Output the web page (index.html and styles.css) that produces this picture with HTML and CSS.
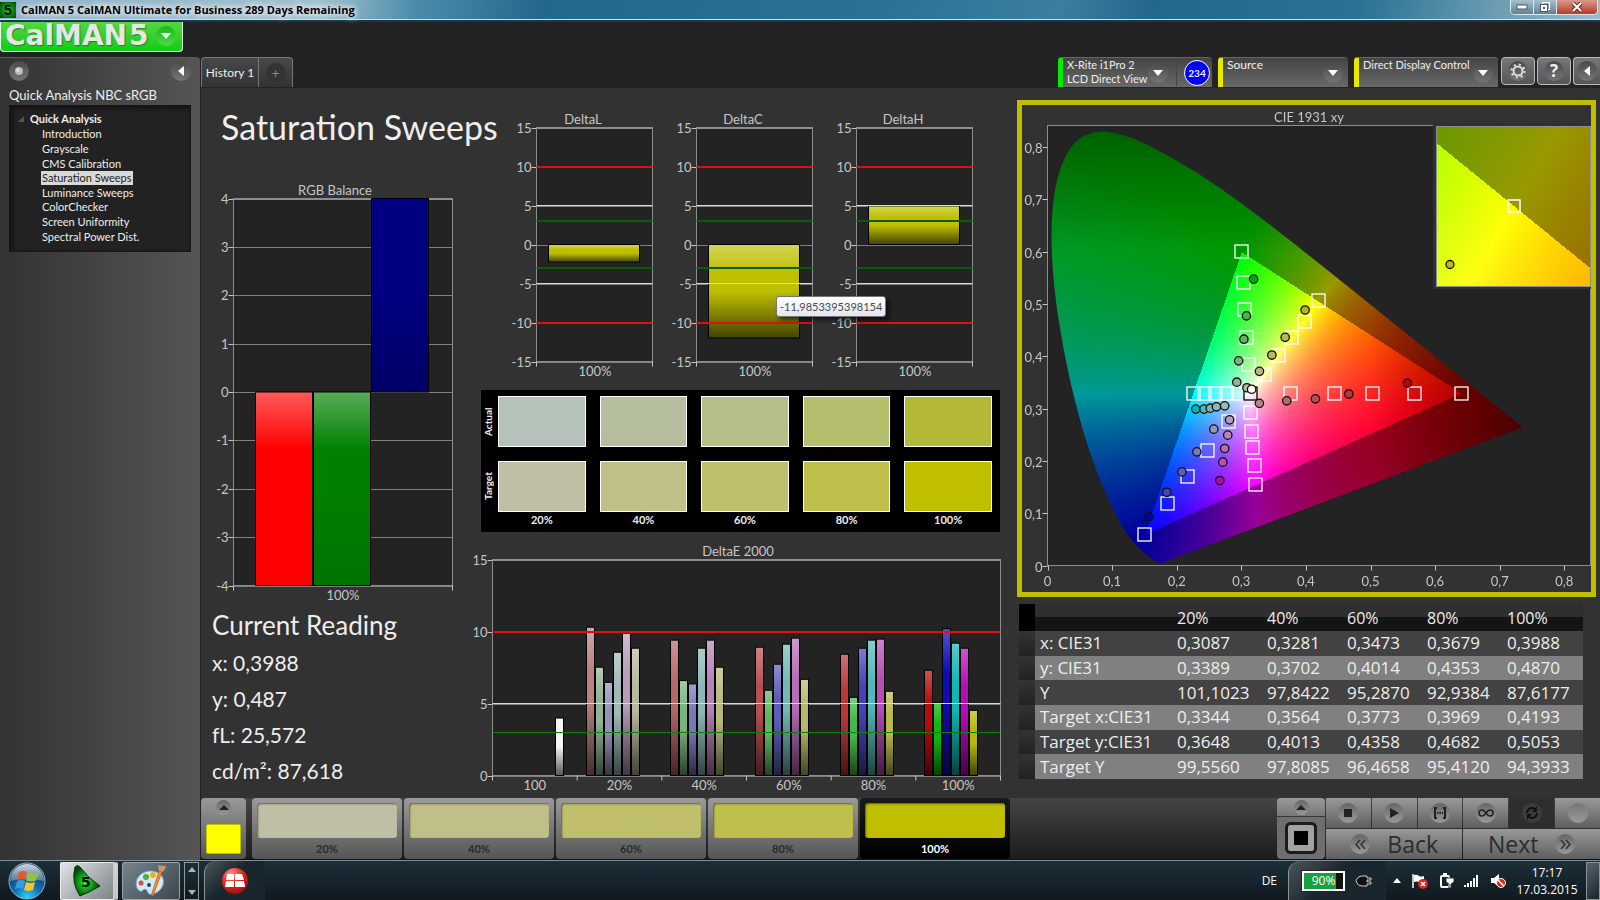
FILE: index.html
```html
<!DOCTYPE html>
<html lang="en">
<head>
  <meta charset="UTF-8">
  <meta name="viewport" content="width=device-width, initial-scale=1.0">
  <title>CalMAN 5 CalMAN Ultimate for Business</title>
  <link rel="stylesheet" href="styles.css">
</head>
<body>
  <!-- Window title bar -->
  <div class="titlebar">
    <span class="app-icon">5</span>
    <span class="window-title">CalMAN 5 CalMAN Ultimate for Business 289 Days Remaining</span>
    <div class="window-buttons">
      <button type="button" aria-label="Minimize"><svg width="12" height="6"><rect x="1" y="1" width="10" height="4" fill="#fff" stroke="#4a5a68"/></svg></button>
      <button type="button" aria-label="Restore"><svg width="12" height="12"><rect x="3.5" y="1.5" width="7" height="7" fill="none" stroke="#fff"/><rect x="1.5" y="3.5" width="7" height="7" fill="#fff" stroke="#4a5a68"/><rect x="4" y="6" width="2" height="2" fill="#4a5a68"/></svg></button>
      <button type="button" class="close" aria-label="Close"><svg width="12" height="10" viewBox="0 0 12 10"><path d="M2 1l8 8M10 1l-8 8" stroke="#5a2a28" stroke-width="4"/><path d="M2 1l8 8M10 1l-8 8" stroke="#fff" stroke-width="2"/></svg></button>
    </div>
  </div>

  <div class="brandbar">
    <button type="button" class="logo">
      <span class="logo-text">CalMAN</span><span class="logo-text">5</span>
      <span class="round logo-arrow"><svg width="10" height="6"><path d="M0 0h10L5 6z" fill="#fff"/></svg></span>
    </button>
  </div>

  <div class="workspace">
    <aside class="sidebar">
      <div class="sidebar-top">
        <button type="button" class="round" aria-label="Options"><svg width="10" height="10"><circle cx="5" cy="5" r="4" fill="#bbb"/><circle cx="4" cy="4" r="2" fill="#ddd"/></svg></button>
        <button type="button" class="round" aria-label="Collapse"><svg width="6" height="10"><path d="M6 0v10L0 5z" fill="#fff"/></svg></button>
      </div>
      <h2>Quick Analysis NBC sRGB</h2>
      <nav class="tree">
        <p><svg width="6" height="6"><path d="M6 0v6H0z" fill="#555"/></svg>Quick Analysis</p>
        <ul>
          <li><a href="#">Introduction</a></li>
          <li><a href="#">Grayscale</a></li>
          <li><a href="#">CMS Calibration</a></li>
          <li><a href="#" class="selected">Saturation Sweeps</a></li>
          <li><a href="#">Luminance Sweeps</a></li>
          <li><a href="#">ColorChecker</a></li>
          <li><a href="#">Screen Uniformity</a></li>
          <li><a href="#">Spectral Power Dist.</a></li>
        </ul>
      </nav>
    </aside>

    <div class="content">
      <header class="header">
        <div class="tabs">
          <button type="button" class="tab">History 1</button>
          <button type="button" class="tab tab-add" aria-label="New tab"><span class="round">+</span></button>
        </div>
        <div class="devices">
          <div class="device meter">
            <button type="button" class="device-name">X-Rite i1Pro 2<br>LCD Direct View</button>
            <span class="round"><svg width="10" height="6"><path d="M0 0h10L5 6z" fill="#fff"/></svg></span>
            <span class="counter"><b>234</b></span>
          </div>
          <div class="device source">
            <button type="button" class="device-name">Source</button>
            <span class="round"><svg width="10" height="6"><path d="M0 0h10L5 6z" fill="#fff"/></svg></span>
          </div>
          <div class="device display">
            <button type="button" class="device-name">Direct Display Control</button>
            <span class="round"><svg width="10" height="6"><path d="M0 0h10L5 6z" fill="#fff"/></svg></span>
          </div>
          <button type="button" class="tool" aria-label="Settings"><span class="round"><svg width="16" height="16" viewBox="0 0 16 16" fill="none" stroke="#ddd"><circle cx="8" cy="8" r="4.5" stroke-width="2"/><circle cx="8" cy="8" r="6.5" stroke-width="2" stroke-dasharray="2.1 3"/></svg></span></button>
          <button type="button" class="tool" aria-label="Help"><span class="round help">?</span></button>
          <button type="button" class="tool tool-last" aria-label="Hide"><span class="round"><svg width="6" height="10"><path d="M6 0v10L0 5z" fill="#fff"/></svg></span></button>
        </div>
      </header>

      <main class="main">
        <section class="col-left">
          <h1>Saturation Sweeps</h1>
          <svg class="chart" id="rgbBalance" viewBox="0 0 280 425"></svg>
          <div class="reading">
            <h2>Current Reading</h2>
            <p>x: 0,3988</p>
            <p>y: 0,487</p>
            <p>fL: 25,572</p>
            <p>cd/m²: 87,618</p>
          </div>
        </section>

        <section class="col-middle">
          <div class="deltas">
            <div class="delta"><svg class="chart" id="deltaL" viewBox="0 0 160 275"></svg></div>
            <div class="delta">
              <svg class="chart" id="deltaC" viewBox="0 0 160 275"></svg>
              <div class="tooltip">-11,9853395398154</div>
            </div>
            <div class="delta"><svg class="chart" id="deltaH" viewBox="0 0 160 275"></svg></div>
          </div>
          <div class="swatches">
            <span class="side">Actual</span>
            <i class="a20"></i><i class="a40"></i><i class="a60"></i><i class="a80"></i><i class="a100"></i>
            <span class="side">Target</span>
            <i class="t20"></i><i class="t40"></i><i class="t60"></i><i class="t80"></i><i class="t100"></i>
            <span></span>
            <b>20%</b><b>40%</b><b>60%</b><b>80%</b><b>100%</b>
          </div>
          <svg class="chart" id="deltaE" viewBox="0 0 530 250"></svg>
        </section>

        <section class="col-right">
          <div class="cie">
            <svg class="chart" id="cie" viewBox="0 0 569 487">
              <foreignObject x="26" y="21" width="542" height="440"><canvas id="gamut" width="542" height="440"></canvas></foreignObject>
              <g id="ciePoints"></g>
              <rect x="411" y="18" width="160" height="166" fill="#303030"/>
              <foreignObject x="414" y="22" width="154" height="159"><canvas id="gamutZoom" width="154" height="159"></canvas></foreignObject>
              <rect x="414.5" y="21.5" width="154" height="160" fill="none" stroke="#8e8e8e"/>
              <rect x="486" y="95" width="12" height="12" fill="none" stroke="#fff" stroke-width="1.5"/>
              <circle cx="428" cy="159.5" r="4" fill="#bfbf00" stroke="#111" stroke-width="1.3"/>
            </svg>
          </div>
          <table class="readings">
            <thead>
              <tr><th class="grip"></th><th></th><th>20%</th><th>40%</th><th>60%</th><th>80%</th><th>100%</th></tr>
            </thead>
            <tbody>
              <tr><td class="grip"></td><th>x: CIE31</th><td>0,3087</td><td>0,3281</td><td>0,3473</td><td>0,3679</td><td>0,3988</td></tr>
              <tr><td class="grip"></td><th>y: CIE31</th><td>0,3389</td><td>0,3702</td><td>0,4014</td><td>0,4353</td><td>0,4870</td></tr>
              <tr><td class="grip"></td><th>Y</th><td>101,1023</td><td>97,8422</td><td>95,2870</td><td>92,9384</td><td>87,6177</td></tr>
              <tr><td class="grip"></td><th>Target x:CIE31</th><td>0,3344</td><td>0,3564</td><td>0,3773</td><td>0,3969</td><td>0,4193</td></tr>
              <tr><td class="grip"></td><th>Target y:CIE31</th><td>0,3648</td><td>0,4013</td><td>0,4358</td><td>0,4682</td><td>0,5053</td></tr>
              <tr><td class="grip"></td><th>Target Y</th><td>99,5560</td><td>97,8085</td><td>96,4658</td><td>95,4120</td><td>94,3933</td></tr>
            </tbody>
          </table>
        </section>
      </main>

      <footer class="strip">
        <button type="button" class="pattern" aria-label="Pattern colour"><span class="round small"><svg width="10" height="5"><path d="M0 5h10L5 0z" fill="#222"/></svg></span><i></i></button>
        <div class="levels">
          <button type="button" class="level"><i class="t20"></i>20%</button>
          <button type="button" class="level"><i class="t40"></i>40%</button>
          <button type="button" class="level"><i class="t60"></i>60%</button>
          <button type="button" class="level"><i class="t80"></i>80%</button>
          <button type="button" class="level active"><i class="t100"></i>100%</button>
        </div>
        <div class="controls">
          <div class="window-pattern">
            <button type="button" aria-label="More"><span class="round small"><svg width="10" height="5"><path d="M0 5h10L5 0z" fill="#222"/></svg></span></button>
            <button type="button" aria-label="Pattern window"><svg width="32" height="32" viewBox="0 0 32 32"><rect x="1.5" y="1.5" width="29" height="29" rx="4" fill="#a2a2a2" stroke="#1c1c1c" stroke-width="3"/><rect x="9" y="9" width="14" height="14" fill="#000"/></svg></button>
          </div>
          <div class="transport">
            <button type="button" aria-label="Stop"><span class="round"><svg width="8" height="8"><rect width="8" height="8" fill="#222"/></svg></span></button>
            <button type="button" aria-label="Play"><span class="round"><svg width="10" height="10"><path d="M1 0v10l9-5z" fill="#222"/></svg></span></button>
            <button type="button" aria-label="Read series"><span class="round"><svg width="14" height="12" fill="none" stroke="#222" stroke-width="2"><path d="M4 1H2v10h2M10 1h2v10h-2"/><path d="M4 6h6" stroke-dasharray="1.5 1"/></svg></span></button>
            <button type="button" aria-label="Read continuously"><span class="round"><svg width="16" height="8" fill="none" stroke="#222" stroke-width="1.5"><path d="M8 4C6 1 5 1 4 1a3 3 0 0 0 0 6c1 0 2 0 4-3s3-3 4-3a3 3 0 0 1 0 6c-1 0-2 0-4-3z"/></svg></span></button>
            <button type="button" class="pressed" aria-label="Refresh"><span class="round"><svg width="14" height="14" viewBox="0 0 14 14"><path d="M2 7a5 5 0 0 1 8-4M12 7a5 5 0 0 1-8 4" fill="none" stroke="#111" stroke-width="2"/><path d="M12 0v6H7zM2 14V8h5z" fill="#111"/></svg></span></button>
            <button type="button" aria-label="Record"><span class="round blank"></span></button>
            <button type="button" class="wide"><span class="round"><svg width="11" height="11" fill="none" stroke="#333" stroke-width="1.5"><path d="M5 1L1 5.5 5 10M10 1L6 5.5 10 10"/></svg></span>Back</button>
            <button type="button" class="wide">Next<span class="round"><svg width="11" height="11" fill="none" stroke="#333" stroke-width="1.5"><path d="M1 1l4 4.5L1 10M6 1l4 4.5L6 10"/></svg></span></button>
          </div>
        </div>
      </footer>
    </div>
  </div>

  <div class="taskbar">
    <button type="button" class="start" aria-label="Start">
      <svg width="40" height="40" viewBox="0 0 40 40">
        <defs>
          <radialGradient id="orb" cx=".5" cy=".95" r=".9"><stop offset="0" stop-color="#20d8ff"/><stop offset=".4" stop-color="#1272b4"/><stop offset="1" stop-color="#0c2f58"/></radialGradient>
          <linearGradient id="gloss" x2="0" y2="1"><stop offset="0" stop-color="#fff" stop-opacity=".8"/><stop offset="1" stop-color="#fff" stop-opacity=".25"/></linearGradient>
        </defs>
        <circle cx="20" cy="20" r="18" fill="url(#orb)" stroke="#9ab4c4"/>
        <path d="M3 20a17 17 0 0 1 34 0q-17-4-34 0z" fill="url(#gloss)"/>
        <path d="M12 11q4-2 8 0l-2 8q-4-2-8 0z" fill="#e8582a"/>
        <path d="M21 11.5q4 2 11 0l-3 8q-4 2-10 0z" fill="#8ec442"/>
        <path d="M10 20q4-2 8 0l-2 8q-4-2-8 0z" fill="#3c9ae0"/>
        <path d="M19 21q4 2 9 0l-2 8q-5 2-9 0z" fill="#fbc02c"/>
      </svg>
    </button>
    <button type="button" class="task calman" aria-label="CalMAN">
      <svg width="30" height="34" viewBox="0 0 30 34">
        <defs><radialGradient id="blade" cx=".45" cy=".55" r=".5"><stop offset="0" stop-color="#1cff2c"/><stop offset="1" stop-color="#044a08"/></radialGradient></defs>
        <path d="M3 3Q5 0 8 3Q17 15 28 22Q18 28 8 32Q-1 19 3 3z" fill="url(#blade)" stroke="#031" />
        <text x="9" y="23" class="blade-text">5</text>
      </svg>
    </button>
    <button type="button" class="task" aria-label="Paint">
      <svg width="34" height="34" viewBox="0 0 34 34">
        <path d="M3 24C-1 14 9 6 18 7c9 1 13 7 11 14-3 9-14 11-15 8-1-4-3-5-6-2-2 1-4-1-5-3z" fill="#d3e9f6" stroke="#6aa6cc"/>
        <circle cx="7" cy="19" r="2.5" fill="#e5483c"/><circle cx="12" cy="13" r="3" fill="#4cae3c"/><circle cx="19" cy="11" r="3" fill="#f2b01e"/><circle cx="15" cy="21" r="2" fill="#1c4a70"/>
        <path d="M25 7l3 1-9 24q-2 0-1-3z" fill="#f08a24" stroke="#a85a10" stroke-width=".6"/><path d="M24 1q6 1 8 1-1 5-4 6l-3-1z" fill="#c89660"/>
      </svg>
    </button>
    <div class="task-scroll">
      <button type="button" aria-label="Up"><svg width="8" height="5"><path d="M0 5h8L4 0z" fill="#aab4ba"/></svg></button>
      <button type="button" aria-label="Down"><svg width="8" height="5"><path d="M0 0h8L4 5z" fill="#aab4ba"/></svg></button>
    </div>
    <div class="dock dock-left">
      <svg width="28" height="28" viewBox="0 0 28 28">
        <defs><radialGradient id="ball" cx=".35" cy=".2" r=".9"><stop offset="0" stop-color="#ff8a80"/><stop offset=".5" stop-color="#e0261c"/><stop offset="1" stop-color="#8e0c08"/></radialGradient></defs>
        <circle cx="14" cy="14" r="13" fill="url(#ball)"/>
        <path d="M6 7h7v6H5zM14 7h7l2 6h-9zM5 14h8v6H4zM14 14h9l1 6H14z" fill="#fff"/>
      </svg>
    </div>
    <span class="lang">DE</span>
    <div class="dock dock-right">
      <span class="battery"><span>90%</span></span>
      <svg width="18" height="14" viewBox="0 0 18 14"><path d="M7 2h5v2h4v2h-4v2h4v2h-4v2H7Q3 12 2 9Q0 6 2 5Q3 2 7 2z" fill="#111" stroke="#ccc"/></svg>
    </div>
    <div class="tray">
      <svg width="8" height="5"><path d="M0 5h8L4 0z" fill="#fff"/></svg>
      <svg width="18" height="16" viewBox="0 0 18 16"><path d="M2 1v14" stroke="#fff" stroke-width="1.5"/><path d="M3 2q3-1 5 1 2 1 5 0v7q-3 1-5-1-2-1-5 0z" fill="#fff"/><circle cx="12" cy="11" r="5" fill="#d8281c"/><path d="M10 9l4 4M14 9l-4 4" stroke="#fff" stroke-width="1.5"/></svg>
      <svg width="16" height="16" viewBox="0 0 16 16"><rect x="2" y="3" width="8" height="11" rx="1" fill="none" stroke="#fff" stroke-width="2"/><path d="M4 1h4" stroke="#fff" stroke-width="2"/><path d="M7 5h8v4l-3 2v4h-2v-4L7 9z" fill="#fff" stroke="#234"/></svg>
      <svg width="16" height="12" fill="#fff"><path d="M0 10h2v2H0zM3 8h2v4H3zM6 6h2v6H6zM9 3h2v9H9zM12 0h2v12h-2z"/></svg>
      <svg width="18" height="16" viewBox="0 0 18 16"><path d="M1 5h3l5-4v13l-5-4H1z" fill="#fff"/><circle cx="11" cy="10" r="4.5" fill="#d8281c" stroke="#fff"/><path d="M8 7l6 6" stroke="#fff" stroke-width="1.5"/></svg>
    </div>
    <div class="clock">17:17<br>17.03.2015</div>
    <button type="button" class="show-desktop" aria-label="Show desktop"></button>
  </div>

  <script src="charts.js"></script>
</body>
</html>
```
FILE: styles.css
```css
/* General */
* {
  box-sizing: border-box;
  margin: 0;
  padding: 0;
}

body {
  font-family: Lato, "Open Sans", sans-serif;
  font-size: 12px;
  background-color: #232323;
  color: #eee;
  display: flex;
  flex-direction: column;
  height: 100vh;
  overflow: hidden;
}

button {
  font: inherit;
  color: inherit;
  border: none;
  background: none;
}

svg, canvas {
  display: block;
}

ul {
  list-style: none;
}

a {
  color: inherit;
  text-decoration: none;
}

.round {
  width: 20px;
  height: 20px;
  flex: none;
  border-radius: 50%;
  background: linear-gradient(#4a4a4a, #757575);
  display: flex;
  align-items: center;
  justify-content: center;
}

.round.small {
  width: 15px;
  height: 15px;
}

/* Title bar */
.titlebar {
  height: 22px;
  flex: none;
  display: flex;
  align-items: center;
  background: linear-gradient(100deg, #8fb3c8 0%, #a3c0cf 20%, #4b8cab 26%, #22688a 34%, #2a7295 55%, #3a7f9f 66%, #22688a 72%, #2a7294 85%, #7fa9bc 96%, #9cbccb 100%);
  border-bottom: 2px solid #16384a;
  box-shadow: inset 0 -1px #cfe0e8;
}

.app-icon {
  width: 16px;
  height: 16px;
  background: radial-gradient(#12d41c, #063a08);
  color: #000;
  font: bold 14px/16px "Liberation Sans", sans-serif;
  text-align: center;
}

.window-title {
  margin-left: 5px;
  color: #000;
  font: bold 11px/20px "Open Sans", sans-serif;
  text-shadow: 0 0 6px #fff, 0 0 6px #fff;
}

.window-buttons {
  display: flex;
  margin: 0 2px 0 auto;
  align-self: flex-start;
  height: 15px;
  border: 1px solid #dbe8ee;
  border-top: none;
  border-radius: 0 0 5px 5px;
  overflow: hidden;
}

.window-buttons button {
  width: 23px;
  display: flex;
  align-items: center;
  justify-content: center;
  background: linear-gradient(#a8c0cc, #5d8296);
  border-right: 1px solid #dbe8ee;
}

.window-buttons .close {
  width: 40px;
  background: linear-gradient(#d89a8c, #b83a24);
  border-right: none;
}

/* Logo */
.brandbar {
  height: 35px;
  flex: none;
}

.logo {
  display: flex;
  align-items: center;
  width: 183px;
  height: 30px;
  padding: 0 6px 2px 4px;
  background: linear-gradient(#56d640, #12cc18);
  border: 1px solid #e8ffe8;
  border-top: none;
  border-radius: 0 0 4px 4px;
}

.logo-text {
  font: bold 28px/28px "DejaVu Sans", sans-serif;
  color: #e4e8e4;
  text-shadow: 1px 1px 1px #2b7a2b;
  margin-right: 2px;
}

.logo-arrow {
  margin-left: auto;
  background: linear-gradient(#12b818, #4cdc48);
}

/* Sidebar */
.workspace {
  flex: 1;
  display: flex;
  min-height: 0;
}

.sidebar {
  width: 200px;
  flex: none;
  background: linear-gradient(90deg, #333, #555);
  border-top: 1px solid #5a5a5a;
  border-radius: 0 4px 0 0;
  padding: 3px 9px;
}

.sidebar-top {
  display: flex;
  justify-content: space-between;
}

.sidebar h2 {
  font-size: 13px;
  font-weight: normal;
  line-height: 20px;
  margin-top: 4px;
}

.tree {
  height: 147px;
  background: #222;
  border: 1px solid #161616;
  box-shadow: inset 2px 2px 5px #111;
  padding-top: 6px;
  font-size: 11px;
}

.tree p {
  display: flex;
  align-items: center;
  gap: 6px;
  margin-bottom: 1px;
  padding-left: 8px;
  font-weight: bold;
  line-height: 14px;
}

.tree ul {
  display: grid;
  grid-auto-rows: 1fr;
  height: 117px;
  padding-left: 31px;
}

.tree li {
  display: flex;
  align-items: center;
}

.tree a {
  padding: 0 1px;
  line-height: 14px;
}

.tree .selected {
  background: #d9d9d9;
  color: #222;
}

/* Header with tabs and devices */
.content {
  flex: 1;
  min-width: 0;
  display: flex;
  flex-direction: column;
  border-left: 1px solid #222;
}

.header {
  height: 31px;
  flex: none;
  display: flex;
  justify-content: space-between;
}

.tabs, .devices {
  display: flex;
}

.tab {
  width: 58px;
  height: 30px;
  border: 1px solid #777;
  border-bottom: none;
  border-radius: 4px 0 0 0;
  background: linear-gradient(#484848, #333);
}

.tab-add {
  width: 34px;
  border-left: none;
  border-radius: 0 4px 0 0;
  display: flex;
  align-items: center;
  justify-content: center;
}

.tab-add .round {
  background: #333;
  color: #888;
  font-size: 14px;
}

.device {
  height: 30px;
  margin-right: 6px;
  display: flex;
  align-items: center;
  border-top: 1px solid #666;
  border-left: 5px solid #e8e800;
  border-radius: 4px 4px 0 0;
  background: linear-gradient(#444, #686868);
}

.device-name {
  align-self: flex-start;
  flex: 1;
  padding-left: 4px;
  text-align: left;
  line-height: 14px;
  white-space: nowrap;
}

.device .round {
  margin-right: 5px;
}

.meter {
  width: 154px;
  border-left-color: #0e0;
}

.meter .device-name {
  font-size: 11px;
}

.meter .round {
  margin-right: 8px;
}

.source {
  width: 130px;
}

.display {
  width: 144px;
  margin-right: 3px;
}

.display .device-name {
  font-size: 11px;
}

.counter {
  border-left: 1px solid #444;
  padding: 0 2px 0 7px;
}

.counter b {
  display: block;
  width: 26px;
  height: 26px;
  border-radius: 50%;
  border: 1px solid #fff;
  background: #00f;
  font-size: 10px;
  line-height: 24px;
  text-align: center;
}

.tool {
  width: 34px;
  height: 28px;
  margin-right: 2px;
  border: 1px solid #bbb;
  border-radius: 4px;
  background: linear-gradient(#777, #555);
  display: flex;
  align-items: center;
  justify-content: center;
}

.tool-last {
  width: 27px;
  margin-right: 0;
  border-right: none;
  border-radius: 4px 0 0 4px;
}

.help {
  font: bold 17px/20px "Open Sans", sans-serif;
}

/* Main area */
.main {
  flex: 1;
  min-height: 0;
  display: grid;
  grid-template-columns: minmax(0, 280fr) minmax(0, 530fr) minmax(0, 589fr);
  background: #323232;
}

.chart {
  width: 100%;
  height: auto;
  overflow: visible;
  font-size: 13px;
  fill: #c6c6c6;
}

h1 {
  height: 92px;
  padding: 17px 0 0 20px;
  font-size: 34px;
  font-weight: normal;
  line-height: 44px;
  white-space: nowrap;
}

.reading {
  padding: 5px 0 0 11px;
}

.reading h2 {
  margin-bottom: 5px;
  font-size: 26px;
  font-weight: normal;
  line-height: 30px;
}

.reading p {
  font-size: 21px;
  line-height: 36px;
}

.deltas {
  display: flex;
  padding: 17px 34px 10px 16px;
}

.delta {
  flex: 1;
  position: relative;
}

.tooltip {
  position: absolute;
  z-index: 2;
  left: 119px;
  top: 191px;
  padding: 0 3px;
  border: 1px solid #767676;
  border-radius: 3px;
  background: linear-gradient(#fff, #e4e5f0);
  box-shadow: 3px 3px 4px rgba(0, 0, 0, 0.6);
  color: #4c4c4c;
  font-size: 11px;
  line-height: 19px;
}

.swatches {
  display: grid;
  grid-template-columns: 3px repeat(5, 1fr);
  grid-template-rows: 51px 51px 14px;
  gap: 14px;
  margin-right: 11px;
  height: 142px;
  padding: 6px 8px 0 0;
  background: #000;
}

.swatches i {
  border: 1px solid #fff;
}

.swatches b {
  margin-top: -13px;
  font-size: 11px;
  text-align: center;
  line-height: 14px;
}

.side {
  width: 14px;
  writing-mode: vertical-rl;
  transform: rotate(180deg);
  text-align: center;
  font-size: 10px;
  font-weight: bold;
  line-height: 14px;
}

.a20 { background: #b4c2ba; }
.a40 { background: #b5bf9f; }
.a60 { background: #b5bf87; }
.a80 { background: #b5be6c; }
.a100 { background: #b3b937; }
.t20 { background: #bfbfa5; }
.t40 { background: #bfbf87; }
.t60 { background: #bfbf6c; }
.t80 { background: #bfbf4c; }
.t100 { background: #bfbf00; }

#deltaE {
  margin-top: 8px;
}

.col-right {
  padding: 12px 4px 0 6px;
}

.cie {
  border: 5px solid #bfbf00;
}

#cie {
  overflow: hidden;
}

/* Readings table */
.readings {
  width: calc(100% - 15px);
  height: 175px;
  margin: 7px 0 0 2px;
  border-collapse: collapse;
  table-layout: fixed;
  font: 17px/20px "Open Sans", sans-serif;
  color: #eee;
}

.readings th {
  font-weight: normal;
  text-align: left;
}

.readings thead tr {
  height: 27px;
  background: linear-gradient(#2f2f2f 50%, #141414 50%);
}

.readings thead th {
  font-size: 16px;
  width: 80px;
}

.readings thead th:nth-child(2) {
  width: 142px;
}

.readings thead th:nth-child(3) {
  width: 90px;
}

.readings thead th:last-child {
  width: 76px;
}

.readings thead th.grip {
  width: 16px;
  background: #000;
}

.readings tbody tr {
  background: #424242;
}

.readings tbody tr:nth-child(even) {
  background: #808080;
}

.readings tbody th {
  padding-left: 5px;
}

.readings tbody .grip {
  background: linear-gradient(#333, #222);
}

/* Bottom strip */
.strip {
  height: 62px;
  flex: none;
  display: flex;
  background: linear-gradient(#444, #1c1c1c);
  border-bottom: 1px solid #111;
}

.pattern {
  width: 45px;
  padding: 2px 5px 5px;
  display: flex;
  flex-direction: column;
  align-items: center;
  justify-content: space-between;
  border-radius: 4px;
  background: linear-gradient(#999, #555);
  margin-right: 6px;
}

.pattern i {
  width: 35px;
  height: 30px;
  border-radius: 2px;
  background: #ff0;
  border: 1px solid #c0c000;
}

.levels {
  flex: 1;
  display: flex;
  gap: 2px;
}

.level {
  width: 150px;
  padding: 5px 5px 0;
  border-radius: 4px;
  background: linear-gradient(#9a9a9a, #555);
  color: #2a2a2a;
  font-size: 11px;
  font-weight: bold;
  line-height: 21px;
  display: flex;
  flex-direction: column;
  align-items: stretch;
  text-align: center;
}

.level i {
  height: 36px;
  border-radius: 3px;
  box-shadow: inset 1px 1px 2px rgba(0, 0, 0, 0.5);
}

.level.active {
  background: linear-gradient(#1a1a1a, #000);
  color: #fff;
}

.controls {
  width: 323px;
  display: flex;
  gap: 1px;
}

.window-pattern {
  width: 48px;
  display: flex;
  flex-direction: column;
  gap: 1px;
}

.window-pattern button {
  display: flex;
  align-items: center;
  justify-content: center;
  flex: 1;
  background: #6e6e6e;
  border-radius: 0 0 4px 4px;
}

.window-pattern button:first-child {
  flex: none;
  height: 18px;
  background: linear-gradient(#999, #777);
  border-radius: 4px 4px 0 0;
}

.window-pattern .round, .pattern .round, .transport .round {
  background: linear-gradient(#666, #999);
}

.transport {
  flex: 1;
  display: grid;
  grid-template-columns: repeat(6, 1fr);
  grid-template-rows: 1fr 1fr;
  gap: 1px;
}

.transport button {
  display: flex;
  align-items: center;
  justify-content: center;
  background: linear-gradient(#999, #5e5e5e);
}

.transport .pressed {
  background: #2e2e2e;
}

.transport .pressed .round {
  background: #3c3c3c;
}

.transport .blank {
  background: linear-gradient(#777, #999);
}

.transport .wide {
  grid-column: span 3;
  gap: 17px;
  color: #2c2c2c;
  font: 23px/28px "Open Sans", sans-serif;
}

/* Taskbar */
.taskbar {
  height: 40px;
  flex: none;
  display: flex;
  align-items: center;
  background: linear-gradient(#1c2f38, #10191f);
  border-top: 1px solid #7f8d94;
  color: #fff;
  font-family: "Open Sans", sans-serif;
}

.start {
  margin: 0 13px 0 7px;
}

.task {
  width: 58px;
  height: 38px;
  margin-right: 4px;
  border: 1px solid #9aa4a8;
  border-radius: 2px;
  background: linear-gradient(135deg, #76838a, #3c474d);
  display: flex;
  align-items: center;
  justify-content: center;
}

.calman {
  background: linear-gradient(135deg, #dfe3e4, #7d8486);
  border-color: #eee;
  border-right: 5px double #ccc;
}

.blade-text {
  font: bold 14px "DejaVu Sans", sans-serif;
}

.task-scroll {
  width: 15px;
  height: 38px;
  border: 1px solid #8d989e;
  display: flex;
  flex-direction: column;
  justify-content: space-between;
  align-items: center;
  padding: 4px 0;
}

.dock {
  height: 39px;
  display: flex;
  align-items: center;
  border-left: 1px solid #88949a;
  border-radius: 12px 0 0 0;
  background: linear-gradient(135deg, #4b565b 0%, #1a262d 45%);
}

.dock-left {
  width: 61px;
  margin-left: 5px;
  justify-content: center;
}

.lang {
  margin: 0 11px 0 auto;
}

.dock-right {
  width: 98px;
  padding-left: 13px;
  gap: 10px;
}

.battery {
  width: 43px;
  height: 20px;
  border: 2px solid #fff;
  background: linear-gradient(90deg, #18a03c 82%, #111 82%);
  outline: 1px solid #222;
  line-height: 16px;
  text-align: center;
}

.tray {
  width: 115px;
  display: flex;
  align-items: center;
  justify-content: space-between;
  margin-left: 7px;
}

.clock {
  width: 78px;
  text-align: center;
  line-height: 17px;
}

.show-desktop {
  width: 14px;
  height: 38px;
  border: 1px solid #88949a;
  background: linear-gradient(135deg, #57646b, #18242b);
}
```
FILE: charts.js
```js
const NS = 'http://www.w3.org/2000/svg';

function add(parent, tag, attrs, text) {
  const el = document.createElementNS(NS, tag);
  for (const key in attrs) el.setAttribute(key, attrs[key]);
  if (text !== undefined) el.textContent = text;
  parent.appendChild(el);
  return el;
}

function line(svg, x1, y1, x2, y2, stroke, width) {
  add(svg, 'line', { x1, y1, x2, y2, stroke, 'stroke-width': width || 1 });
}

function label(svg, x, y, text, anchor) {
  add(svg, 'text', { x, y, 'text-anchor': anchor || 'middle' }, text);
}

// Light top and dark bottom laid over each bar
function shade(svg, id, light, dark) {
  const g = add(add(svg, 'defs', {}), 'linearGradient', { id, x2: 0, y2: 1 });
  add(g, 'stop', { offset: 0, 'stop-color': '#fff', 'stop-opacity': light });
  add(g, 'stop', { offset: 0.3, 'stop-color': '#fff', 'stop-opacity': 0 });
  add(g, 'stop', { offset: 0.5, 'stop-color': '#000', 'stop-opacity': 0 });
  add(g, 'stop', { offset: 1, 'stop-color': '#000', 'stop-opacity': dark });
}

function bar(svg, x, y, width, height, fill, shadeId) {
  add(svg, 'rect', { x, y, width, height, fill });
  add(svg, 'rect', { x, y, width, height, fill: `url(#${shadeId})`, stroke: '#000' });
}

// Plot frame with horizontal grid lines and value labels
function frame(svg, p) {
  const y = v => p.bottom - (v - p.min) * (p.bottom - p.top) / (p.max - p.min);
  add(svg, 'rect', { x: p.left, y: p.top, width: p.right - p.left, height: p.bottom - p.top, fill: '#232323' });
  for (let v = p.min; v <= p.max; v += p.step) {
    const gy = Math.round(y(v)) + 0.5;
    line(svg, p.left, gy, p.right, gy, '#808080');
    line(svg, p.left - 5, gy, p.left, gy, '#c6c6c6');
    label(svg, p.left - 5, gy + 4, v, 'end');
  }
  add(svg, 'rect', { x: p.left, y: p.top, width: p.right - p.left, height: p.bottom - p.top, fill: 'none', stroke: '#8e8e8e' });
  line(svg, p.left, p.top + 0.5, p.right, p.top + 0.5, '#8e8e8e', 2);
  label(svg, p.titleX, p.top - 4, p.title);
  return y;
}

function rgbBalance() {
  const svg = document.getElementById('rgbBalance');
  const p = { left: 32.5, right: 251.5, top: 18.5, bottom: 405.5, min: -4, max: 4, step: 1, title: 'RGB Balance', titleX: 134 };
  const y = frame(svg, p);
  shade(svg, 'shadeR', 0.35, 0);
  shade(svg, 'shadeG', 0.35, 0.1);
  shade(svg, 'shadeB', 0, 0.2);
  bar(svg, 54.5, y(0), 57, y(-4) - y(0), '#f00', 'shadeR');
  bar(svg, 112.5, y(0), 57, y(-4) - y(0), '#008000', 'shadeG');
  bar(svg, 170.5, y(4), 57, y(0) - y(4), '#000080', 'shadeB');
  line(svg, p.left, p.bottom, p.left, p.bottom + 5, '#c6c6c6');
  line(svg, p.right, p.bottom, p.right, p.bottom + 5, '#c6c6c6');
  label(svg, 142, p.bottom + 14, '100%');
}

function delta(id, title, value) {
  const svg = document.getElementById(id);
  const p = { left: 39.5, right: 155.5, top: 22.5, bottom: 256.5, min: -15, max: 15, step: 5, title: title, titleX: 86 };
  const y = frame(svg, p);
  shade(svg, id + 'Shade', 0.35, 0.65);
  bar(svg, 51.5, Math.min(y(0), y(value)), 91, Math.abs(y(value) - y(0)), '#bfbf00', id + 'Shade');
  [[10, '#e01010', 2], [5, '#f0f020', 1], [3, '#0a5c0a', 2], [-3, '#0a5c0a', 2], [-5, '#f0f020', 1], [-10, '#e01010', 2]].forEach(l => {
    const ly = Math.round(y(l[0])) + (l[2] === 1 ? -0.5 : 0);
    line(svg, p.left, ly, p.right, ly, l[1], l[2]);
  });
  line(svg, p.left, p.bottom, p.left, p.bottom + 5, '#c6c6c6');
  line(svg, p.right, p.bottom, p.right, p.bottom + 5, '#c6c6c6');
  label(svg, 98, p.bottom + 14, '100%');
}

function deltaE() {
  const svg = document.getElementById('deltaE');
  const p = { left: 11.5, right: 519.5, top: 19.5, bottom: 235.5, min: 0, max: 15, step: 5, title: 'DeltaE 2000', titleX: 257 };
  const y = frame(svg, p);
  shade(svg, 'shadeE', 0.3, 0.65);
  const groups = [
    { name: '100', values: [0, 0, 0, 0, 0, 0, 3.99], colors: ['', '', '', '', '', '', '#f4f4f4'] },
    { name: '20%', values: [10.3, 7.52, 6.47, 8.56, 9.88, 8.84], colors: ['#b98383', '#94b394', '#9494b8', '#a0b8b8', '#b89eb8', '#b8b89c'] },
    { name: '40%', values: [9.4, 6.59, 6.36, 8.84, 9.4, 7.52], colors: ['#b96868', '#7ab47a', '#7878b8', '#8cb8b8', '#b884b8', '#b8b880'] },
    { name: '60%', values: [8.91, 5.92, 7.73, 9.12, 9.54, 6.68], colors: ['#b95050', '#60b660', '#5e5eb8', '#74b8b8', '#b86cb8', '#b8b868'] },
    { name: '80%', values: [8.42, 5.43, 8.84, 9.4, 9.47, 5.85], colors: ['#b93838', '#46b846', '#4444b8', '#54b8b8', '#b84eb8', '#b8b84c'] },
    { name: '100%', values: [7.31, 5.08, 10.2, 9.19, 8.84, 4.52], colors: ['#b80c0c', '#0cb80c', '#0c0cb8', '#0cb8b8', '#b80cb8', '#b8b80c'] }
  ];
  const width = (p.right - p.left) / groups.length;
  groups.forEach((g, i) => {
    const start = p.left + i * width;
    g.values.forEach((v, j) => {
      if (v) bar(svg, Math.round(start + 8.5 + j * 9) + 0.5, y(v), 8, p.bottom - y(v), g.colors[j], 'shadeE');
    });
    line(svg, start, p.bottom, start, p.bottom + 5, '#c6c6c6');
    label(svg, start + width / 2, p.bottom + 14, g.name);
  });
  line(svg, p.right, p.bottom, p.right, p.bottom + 5, '#c6c6c6');
  line(svg, p.left, Math.round(y(10)), p.right, Math.round(y(10)), '#e01010', 2);
  line(svg, p.left, Math.round(y(5)) - 0.5, p.right, Math.round(y(5)) - 0.5, '#f0f020');
  line(svg, p.left, Math.round(y(3)) + 0.5, p.right, Math.round(y(3)) + 0.5, '#0a800a');
}

/* CIE 1931 chromaticity diagram */
const locus = [
  [.1741, .005], [.1714, .0051], [.1644, .0109], [.1566, .0177], [.144, .0297], [.1241, .0578], [.1096, .0868],
  [.0913, .1327], [.0687, .2007], [.0454, .295], [.0235, .4127], [.0082, .5384], [.0039, .6548], [.0139, .7502],
  [.0389, .812], [.0743, .8338], [.1142, .8262], [.1547, .8059], [.2296, .7543], [.3016, .6923], [.3731, .6245],
  [.4441, .5547], [.5125, .4866], [.5752, .4242], [.627, .3725], [.6915, .3083], [.7347, .2653]
];

function xyColor(x, y) {
  const X = x / y, Z = (1 - x - y) / y;
  const lin = [
    3.2406 * X - 1.5372 - 0.4986 * Z,
    -0.9689 * X + 1.8758 + 0.0415 * Z,
    0.0557 * X - 0.204 + 1.057 * Z
  ];
  const inside = Math.min(...lin) >= 0;
  const max = Math.max(...lin);
  let level = inside ? 255 : 153;
  if (x > 0.5) level *= 1 - (x - 0.5) * 2.2;
  if (y > 0.6) level *= 1 - (y - 0.6) * 1.6;
  return lin.map(c => level * Math.max(c, 0) / max);
}

function paintGamut(id, x0, y0, sx, sy, clip) {
  const canvas = document.getElementById(id);
  const ctx = canvas.getContext('2d');
  const w = canvas.width, h = canvas.height;
  const img = ctx.createImageData(w, h);
  for (let j = 0; j < h; j++) {
    for (let i = 0; i < w; i++) {
      const c = xyColor(x0 + (i + 0.5) / sx, Math.max(y0 - (j + 0.5) / sy, 0.001));
      const k = (j * w + i) * 4;
      img.data[k] = c[0];
      img.data[k + 1] = c[1];
      img.data[k + 2] = c[2];
      img.data[k + 3] = 255;
    }
  }
  ctx.putImageData(img, 0, 0);
  if (!clip) return;
  // keep only the horseshoe
  const pts = locus.map(p => [(p[0] - x0) * sx, (y0 - p[1]) * sy]);
  ctx.globalCompositeOperation = 'destination-in';
  ctx.beginPath();
  ctx.moveTo(pts[0][0], pts[0][1]);
  for (let i = 1; i < pts.length - 1; i++) {
    ctx.quadraticCurveTo(pts[i][0], pts[i][1], (pts[i][0] + pts[i + 1][0]) / 2, (pts[i][1] + pts[i + 1][1]) / 2);
  }
  ctx.lineTo(pts[pts.length - 1][0], pts[pts.length - 1][1]);
  ctx.closePath();
  ctx.fill();
}

function cie() {
  const g = document.getElementById('ciePoints');
  const svg = document.getElementById('cie');
  const left = 25.5, bottom = 460.5, sx = 646, sy = 523;
  const px = x => left + x * sx, py = y => bottom - y * sy;
  svg.insertBefore(add(svg, 'rect', { x: left, y: 20.5, width: 543, height: 440, fill: '#232323', stroke: '#8e8e8e' }), svg.firstChild);
  paintGamut('gamut', 0, 440 / sy, sx, sy, true);
  paintGamut('gamutZoom', 0.4193 - 78 / 3122, 0.5053 + 79 / 3197, 3122, 3197, false);

  label(svg, 287, 17, 'CIE 1931 xy');
  for (let i = 0; i <= 8; i++) {
    const text = i ? '0,' + i : '0';
    line(svg, Math.round(px(i / 10)) + 0.5, bottom, Math.round(px(i / 10)) + 0.5, bottom + 5, '#c6c6c6');
    label(svg, px(i / 10), bottom + 20, text);
    line(svg, left - 5, Math.round(py(i / 10)) + 0.5, left, Math.round(py(i / 10)) + 0.5, '#c6c6c6');
    label(svg, left - 5, py(i / 10) + 6, text, 'end');
  }

  const targets = [
    [.64, .329], [.567, .329], [.5026, .329], [.444, .329], [.3757, .329],
    [.3, .602], [.303, .542], [.304, .491], [.307, .437], [.3104, .385],
    [.15, .06], [.185, .12], [.216, .1714], [.2464, .2212], [.2796, .2766],
    [.2246, .329], [.242, .329], [.259, .329], [.2767, .329], [.295, .329],
    [.3209, .1555], [.319, .1925], [.3168, .2269], [.315, .2575], [.3133, .2938],
    [.4193, .5073], [.3969, .4682], [.3773, .4375], [.3564, .4023], [.3344, .3658]
  ];
  targets.forEach(t => add(g, 'rect', { x: Math.round(px(t[0])) - 6, y: Math.round(py(t[1])) - 6, width: 13, height: 13, fill: 'none', stroke: '#fff', 'stroke-width': 1.3 }));
  add(g, 'rect', { x: Math.round(px(.3127)) - 6, y: Math.round(py(.329)) - 6, width: 13, height: 13, fill: 'none', stroke: '#000', 'stroke-width': 1.3 });

  const measured = {
    '#c00000': [.557, .3486], '#b83838': [.4665, .328], '#b95050': [.4147, .3187], '#b96868': [.3704, .3149], '#b98383': [.328, .31],
    '#00a800': [.319, .5475], '#46b846': [.308, .4774], '#60b660': [.304, .4327], '#7ab47a': [.2959, .3913], '#94b394': [.293, .3505],
    '#0000b8': [.1567, .093], '#4444b8': [.1846, .14], '#5e5eb8': [.208, .179], '#7878b8': [.2312, .2173], '#9494b8': [.2574, .2607],
    '#00b8b8': [.2295, .299], '#54b8b8': [.2423, .299], '#74b8b8': [.252, .3008], '#8cb8b8': [.2615, .3034], '#a0b8b8': [.2743, .3053],
    '#b800b8': [.2667, .1625], '#b84eb8': [.2714, .1976], '#b86cb8': [.2743, .2237], '#b884b8': [.279, .2492], '#b89eb8': [.2819, .2785],
    '#b8b800': [.3988, .4885], '#b8b84c': [.3679, .4363], '#b8b868': [.3473, .4024], '#b8b880': [.3281, .3712], '#b8b89c': [.3087, .3399],
    '#ffffff': [.316, .337]
  };
  for (const color in measured) {
    add(g, 'circle', { cx: px(measured[color][0]), cy: py(measured[color][1]), r: 4.2, fill: color, stroke: '#111', 'stroke-width': 1.3 });
  }
}

rgbBalance();
delta('deltaL', 'DeltaL', -2.25);
delta('deltaC', 'DeltaC', -11.9853395398154);
delta('deltaH', 'DeltaH', 4.95);
deltaE();
cie();
```
